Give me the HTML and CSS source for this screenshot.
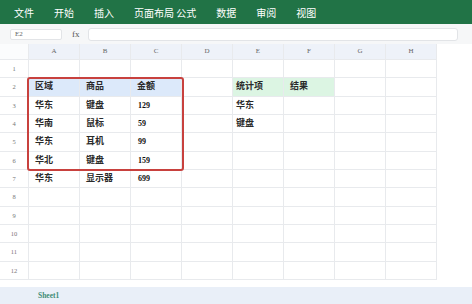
FILE: index.html
```html
<!DOCTYPE html>
<html lang="zh-CN">
<head>
    <meta charset="UTF-8">
    <meta name="viewport" content="width=device-width, initial-scale=1.0">
    <title>表格</title>
    <link rel="stylesheet" href="styles.css">
</head>
<body>

    <!-- Ribbon menu -->
    <div class="menu">
        <span>文件</span>
        <span>开始</span>
        <span>插入</span>
        <span>页面布局 公式</span>
        <span>数据</span>
        <span>审阅</span>
        <span>视图</span>
    </div>

    <!-- Formula bar -->
    <div class="formula-bar">
        <div class="name-box">E2</div>
        <div class="fx">fx</div>
        <div class="formula-input"></div>
    </div>

    <!-- Grid -->
    <div class="sheet">
        <div class="grid">
            <div class="corner"></div>
            <div class="col-head">A</div>
            <div class="col-head">B</div>
            <div class="col-head">C</div>
            <div class="col-head">D</div>
            <div class="col-head">E</div>
            <div class="col-head">F</div>
            <div class="col-head">G</div>
            <div class="col-head">H</div>

            <div class="row-head">1</div>
            <div class="cell"></div><div class="cell"></div><div class="cell"></div><div class="cell"></div>
            <div class="cell"></div><div class="cell"></div><div class="cell"></div><div class="cell"></div>

            <div class="row-head">2</div>
            <div class="cell head-blue">区域</div>
            <div class="cell head-blue">商品</div>
            <div class="cell head-blue">金额</div>
            <div class="cell"></div>
            <div class="cell head-green tight">统计项</div>
            <div class="cell head-green">结果</div>
            <div class="cell"></div><div class="cell"></div>

            <div class="row-head">3</div>
            <div class="cell">华东</div>
            <div class="cell">键盘</div>
            <div class="cell num">129</div>
            <div class="cell"></div>
            <div class="cell tight">华东</div>
            <div class="cell"></div><div class="cell"></div><div class="cell"></div>

            <div class="row-head">4</div>
            <div class="cell">华南</div>
            <div class="cell">鼠标</div>
            <div class="cell num">59</div>
            <div class="cell"></div>
            <div class="cell tight">键盘</div>
            <div class="cell"></div><div class="cell"></div><div class="cell"></div>

            <div class="row-head">5</div>
            <div class="cell">华东</div>
            <div class="cell">耳机</div>
            <div class="cell num">99</div>
            <div class="cell"></div><div class="cell"></div><div class="cell"></div><div class="cell"></div><div class="cell"></div>

            <div class="row-head">6</div>
            <div class="cell">华北</div>
            <div class="cell">键盘</div>
            <div class="cell num">159</div>
            <div class="cell"></div><div class="cell"></div><div class="cell"></div><div class="cell"></div><div class="cell"></div>

            <div class="row-head">7</div>
            <div class="cell">华东</div>
            <div class="cell">显示器</div>
            <div class="cell num">699</div>
            <div class="cell"></div><div class="cell"></div><div class="cell"></div><div class="cell"></div><div class="cell"></div>

            <div class="row-head">8</div>
            <div class="cell"></div><div class="cell"></div><div class="cell"></div><div class="cell"></div>
            <div class="cell"></div><div class="cell"></div><div class="cell"></div><div class="cell"></div>

            <div class="row-head">9</div>
            <div class="cell"></div><div class="cell"></div><div class="cell"></div><div class="cell"></div>
            <div class="cell"></div><div class="cell"></div><div class="cell"></div><div class="cell"></div>

            <div class="row-head">10</div>
            <div class="cell"></div><div class="cell"></div><div class="cell"></div><div class="cell"></div>
            <div class="cell"></div><div class="cell"></div><div class="cell"></div><div class="cell"></div>

            <div class="row-head">11</div>
            <div class="cell"></div><div class="cell"></div><div class="cell"></div><div class="cell"></div>
            <div class="cell"></div><div class="cell"></div><div class="cell"></div><div class="cell"></div>

            <div class="row-head">12</div>
            <div class="cell"></div><div class="cell"></div><div class="cell"></div><div class="cell"></div>
            <div class="cell"></div><div class="cell"></div><div class="cell"></div><div class="cell"></div>
        </div>

        <!-- highlight around A2:C6 -->
        <div class="selection"></div>
    </div>

    <!-- Sheet tabs -->
    <div class="tabs">
        <span class="tab">Sheet1</span>
    </div>

</body>
</html>
```

FILE: styles.css
```css
html, body {
    margin: 0;
    padding: 0;
}

body {
    width: 472px;
    height: 304px;
    overflow: hidden;
    background: #ffffff;
    color: #222222;
    font-family: "Liberation Serif", "Noto Sans CJK SC", serif;
    display: flex;
    flex-direction: column;
}

/* Ribbon menu */
.menu {
    height: 24px;
    background: #217346;
    color: #ffffff;
    display: flex;
    align-items: center;
    gap: 20px;
    padding-left: 14px;
    font-size: 10px;
    font-family: "Noto Sans CJK SC", sans-serif;
}

/* Formula bar */
.formula-bar {
    height: 20px;
    background: #f6f7f8;
    display: flex;
    align-items: center;
    padding-left: 10px;
    padding-right: 14px;
}

.name-box {
    width: 52px;
    height: 11px;
    box-sizing: border-box;
    background: #ffffff;
    border: 1px solid #e2e4e7;
    border-radius: 2px;
    font-size: 7px;
    line-height: 9px;
    padding-left: 4px;
    color: #666666;
}

.fx {
    width: 16px;
    margin-left: 10px;
    font-size: 9px;
    color: #555555;
}

.formula-input {
    flex: 1;
    height: 13px;
    box-sizing: border-box;
    background: #ffffff;
    border: 1px solid #e2e4e7;
    border-radius: 3px;
}

/* Grid */
.sheet {
    position: relative;
    height: 236px;
}

.grid {
    display: grid;
    grid-template-columns: 29px repeat(8, 51px);
    grid-template-rows: 16px repeat(12, 18.33px);
    width: 437px;
}

.grid > div {
    box-sizing: border-box;
    border-right: 1px solid #e8eaed;
    border-bottom: 1px solid #e8eaed;
}

.corner {
    background: #fbfcfd;
}

.col-head {
    background: #eef2f9;
    color: #666666;
    font-size: 7px;
    text-align: center;
    line-height: 15px;
}

.row-head {
    background: #ffffff;
    color: #777777;
    font-size: 6.5px;
    text-align: center;
    line-height: 17px;
}

.cell {
    font-size: 9px;
    font-weight: bold;
    line-height: 17px;
    padding-left: 6px;
    white-space: nowrap;
    color: #2a2a2a;
}

.cell.num {
    font-size: 8px;
    padding-left: 7px;
    color: #111111;
}

.cell.tight {
    padding-left: 3px;
}

.head-blue {
    background: #dce9fa;
}

.head-green {
    background: #dcf5e3;
}

.selection {
    position: absolute;
    left: 27px;
    top: 33px;
    width: 157px;
    height: 94px;
    box-sizing: border-box;
    border: 2px solid #c8413e;
    border-radius: 3px;
}

/* Sheet tabs */
.tabs {
    margin-top: 7px;
    flex: 1;
    background: #e9eff8;
    display: flex;
    align-items: center;
    padding-left: 38px;
}

.tab {
    font-size: 7.5px;
    font-weight: bold;
    color: #3f8c76;
}
```
